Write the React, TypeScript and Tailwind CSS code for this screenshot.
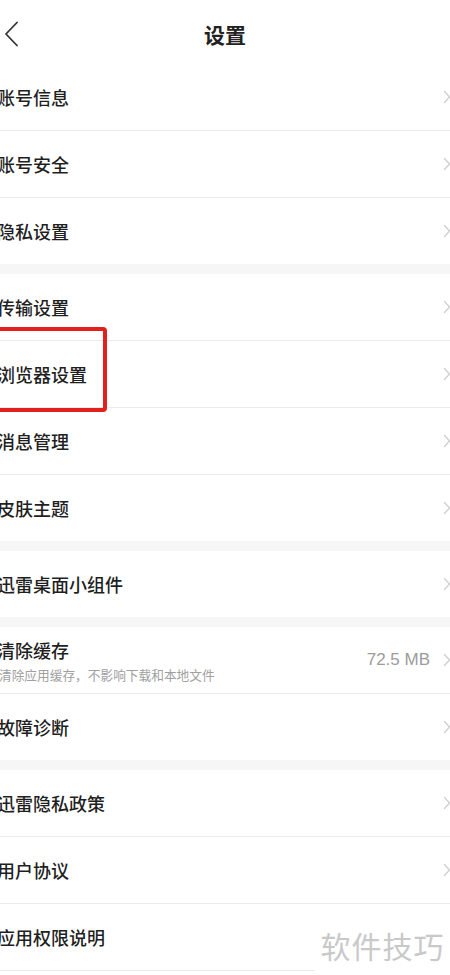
import React from "react";

const Chevron = () => (
  <svg width="8" height="14" viewBox="0 0 8 14" className="shrink-0">
    <path d="M1.5 1.5 L6.5 7 L1.5 12.5" fill="none" stroke="#cfcfcf" strokeWidth="1.3" strokeLinecap="round" strokeLinejoin="round" />
  </svg>
);

type Item = { title: string; sub?: string; value?: string };

const Row = ({ item, divider }: { item: Item; divider: boolean }) => (
  <div className="bg-white">
    <div className="h-[66px] flex items-center">
      <div className="flex-1 flex flex-col ml-[-3px]">
        <div className="text-[18px] leading-[24px] text-[#1f1f1f] font-medium">{item.title}</div>
        {item.sub && <div className="text-[12.7px] leading-[16px] text-[#a0a0a0] mt-[5px] ml-[2px]">{item.sub}</div>}
      </div>
      {item.value && <div className="text-[17px] text-[#9c9c9c] mr-[13px]" style={{ fontFamily: '"Liberation Sans", Arial, sans-serif' }}>{item.value}</div>}
      <div className="w-[8px] mr-[-1px]">
        <Chevron />
      </div>
    </div>
    {divider && <div className="h-px bg-[#ebebeb]" />}
  </div>
);

const Gap = () => <div className="h-[10px] bg-[#f6f6f6]" />;

export default function App() {
  const groups: Item[][] = [
    [{ title: "账号信息" }, { title: "账号安全" }, { title: "隐私设置" }],
    [{ title: "传输设置" }, { title: "浏览器设置" }, { title: "消息管理" }, { title: "皮肤主题" }],
    [{ title: "迅雷桌面小组件" }],
    [{ title: "清除缓存", sub: "清除应用缓存，不影响下载和本地文件", value: "72.5 MB" }, { title: "故障诊断" }],
    [{ title: "迅雷隐私政策" }, { title: "用户协议" }, { title: "应用权限说明" }],
  ];
  return (
    <div
      className="relative w-[450px] h-[975px] overflow-hidden bg-white"
      style={{ fontFamily: '"Noto Sans CJK SC", "Noto Sans", sans-serif' }}
    >
      <div className="relative h-[64px] flex items-center justify-center bg-white">
        <svg width="16" height="26" viewBox="0 0 16 26" className="absolute left-[4px] top-[21px]">
          <path d="M13 1.5 L2 13 L13 24.5" fill="none" stroke="#333" strokeWidth="1.8" strokeLinecap="round" strokeLinejoin="round" />
        </svg>
        <div className="text-[21px] font-bold text-[#222] mt-[5px]">设置</div>
      </div>
      {groups.map((g, gi) => (
        <div key={gi}>
          {gi > 0 && <Gap />}
          {g.map((it, i) => (
            <Row key={i} item={it} divider={i < g.length - 1 || gi === groups.length - 1} />
          ))}
        </div>
      ))}
      <div className="absolute left-[-20px] top-[327px] w-[127px] h-[85px] border-[4px] border-[#e3201d] rounded-[4px]" />
      <div className="absolute left-[315px] top-[915px] w-[135px] h-[60px] bg-white flex items-center justify-center">
        <div className="text-[30px] text-[#c9c9c9] tracking-[1px]">软件技巧</div>
      </div>
    </div>
  );
}
